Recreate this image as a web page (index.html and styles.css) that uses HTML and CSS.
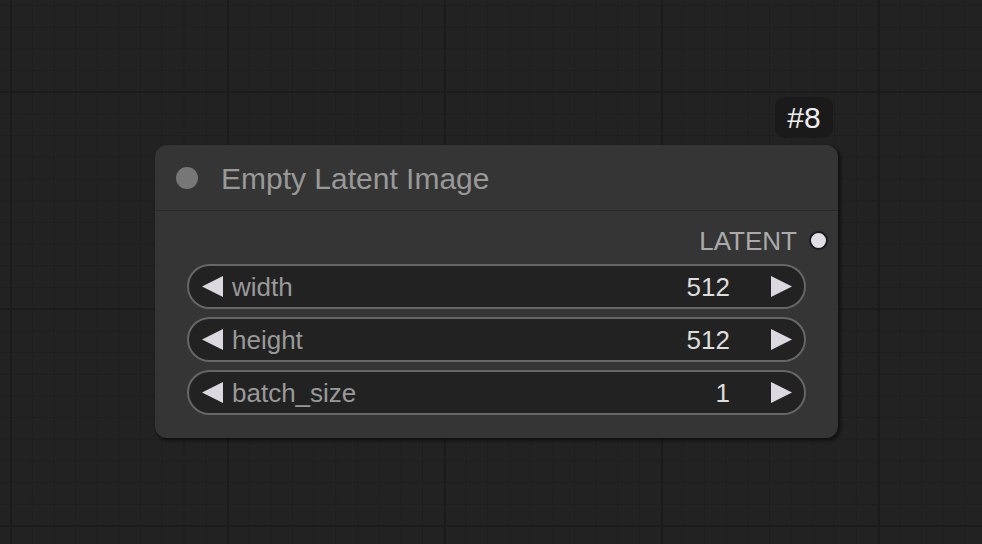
FILE: index.html
```html
<!DOCTYPE html>
<html>
<head>
<meta charset="utf-8">
<link rel="stylesheet" href="styles.css">
</head>
<body>
<div class="canvas">
  <div class="badge">#8</div>
  <div class="node">
    <div class="title">
      <span class="title-dot"></span>
      <span class="title-text">Empty Latent Image</span>
    </div>
    <div class="body">
      <div class="output">
        <span class="output-label">LATENT</span>
        <span class="output-dot"></span>
      </div>
      <div class="widget">
        <svg class="arrow" width="21" height="21" viewBox="0 0 21 21"><polygon points="21,0 21,21 0,10.5"/></svg>
        <span class="w-label">width</span>
        <span class="w-value">512</span>
        <svg class="arrow" width="21" height="21" viewBox="0 0 21 21"><polygon points="0,0 0,21 21,10.5"/></svg>
      </div>
      <div class="widget">
        <svg class="arrow" width="21" height="21" viewBox="0 0 21 21"><polygon points="21,0 21,21 0,10.5"/></svg>
        <span class="w-label">height</span>
        <span class="w-value">512</span>
        <svg class="arrow" width="21" height="21" viewBox="0 0 21 21"><polygon points="0,0 0,21 21,10.5"/></svg>
      </div>
      <div class="widget">
        <svg class="arrow" width="21" height="21" viewBox="0 0 21 21"><polygon points="21,0 21,21 0,10.5"/></svg>
        <span class="w-label">batch_size</span>
        <span class="w-value">1</span>
        <svg class="arrow" width="21" height="21" viewBox="0 0 21 21"><polygon points="0,0 0,21 21,10.5"/></svg>
      </div>
    </div>
  </div>
</div>
</body>
</html>
```
FILE: styles.css
```css
html, body {
  margin: 0;
  padding: 0;
  width: 982px;
  height: 544px;
  overflow: hidden;
  font-family: "Liberation Sans", Arial, sans-serif;
}
.canvas {
  position: relative;
  width: 982px;
  height: 544px;
  background-color: #222222;
  background-image:
    linear-gradient(to right, #1b1b1b 0, #1b1b1b 2px, transparent 2px),
    linear-gradient(to bottom, #1b1b1b 0, #1b1b1b 2px, transparent 2px),
    linear-gradient(to right, #1e1e1e 0, #1e1e1e 1px, transparent 1px),
    linear-gradient(to bottom, #1e1e1e 0, #1e1e1e 1px, transparent 1px);
  background-size: 217px 217px, 217px 217px, 21.7px 21.7px, 21.7px 21.7px;
  background-position: 227px 91px, 227px 91px, 10px 5px, 10px 5px;
}
.badge {
  position: absolute;
  left: 775px;
  top: 97px;
  width: 58px;
  height: 41px;
  border-radius: 9px;
  background: #1a1a1a;
  color: #eeeeee;
  font-size: 30px;
  line-height: 41px;
  text-align: center;
}
.node {
  position: absolute;
  left: 155px;
  top: 145px;
  width: 683px;
  height: 293px;
  background: #353535;
  border-radius: 12px;
  box-shadow: 2px 2px 3px 1px rgba(0, 0, 0, 0.45);
  display: flex;
  flex-direction: column;
}
.title {
  height: 66px;
  border-bottom: 1px solid #2a2a2a;
  display: flex;
  align-items: center;
  padding-left: 21px;
  box-sizing: border-box;
}
.title-dot {
  width: 22px;
  height: 22px;
  border-radius: 50%;
  background: #777777;
  margin-right: 23px;
}
.title-text {
  color: #999999;
  font-size: 30px;
  line-height: 66px;
  padding-top: 2px;
}
.body {
  display: flex;
  flex-direction: column;
  padding: 6px 32px 0 32px;
  gap: 8px;
}
.output {
  height: 46px;
  display: flex;
  align-items: center;
  justify-content: flex-end;
  margin-right: -32px;
  padding-right: 10px;
  margin-bottom: -7px;
}
.output-label {
  color: #aaaaaa;
  font-size: 26px;
  margin-right: 12px;
  padding-top: 2px;
}
.output-dot {
  width: 15px;
  height: 15px;
  border-radius: 50%;
  background: #e1dce5;
  border: 2.5px solid #1b1b1b;
}
.widget {
  height: 45px;
  box-sizing: border-box;
  border: 2px solid #666666;
  border-radius: 23px;
  background: #222222;
  display: flex;
  align-items: center;
  padding: 0 12px 0 13px;
}
.arrow {
  fill: #ddd8e0;
  flex: none;
}
.w-label {
  color: #999999;
  font-size: 26px;
  margin-left: 9px;
  flex: 1;
  padding-top: 2px;
}
.w-value {
  color: #dddddd;
  font-size: 26px;
  margin-right: 41px;
  padding-top: 2px;
}
```
